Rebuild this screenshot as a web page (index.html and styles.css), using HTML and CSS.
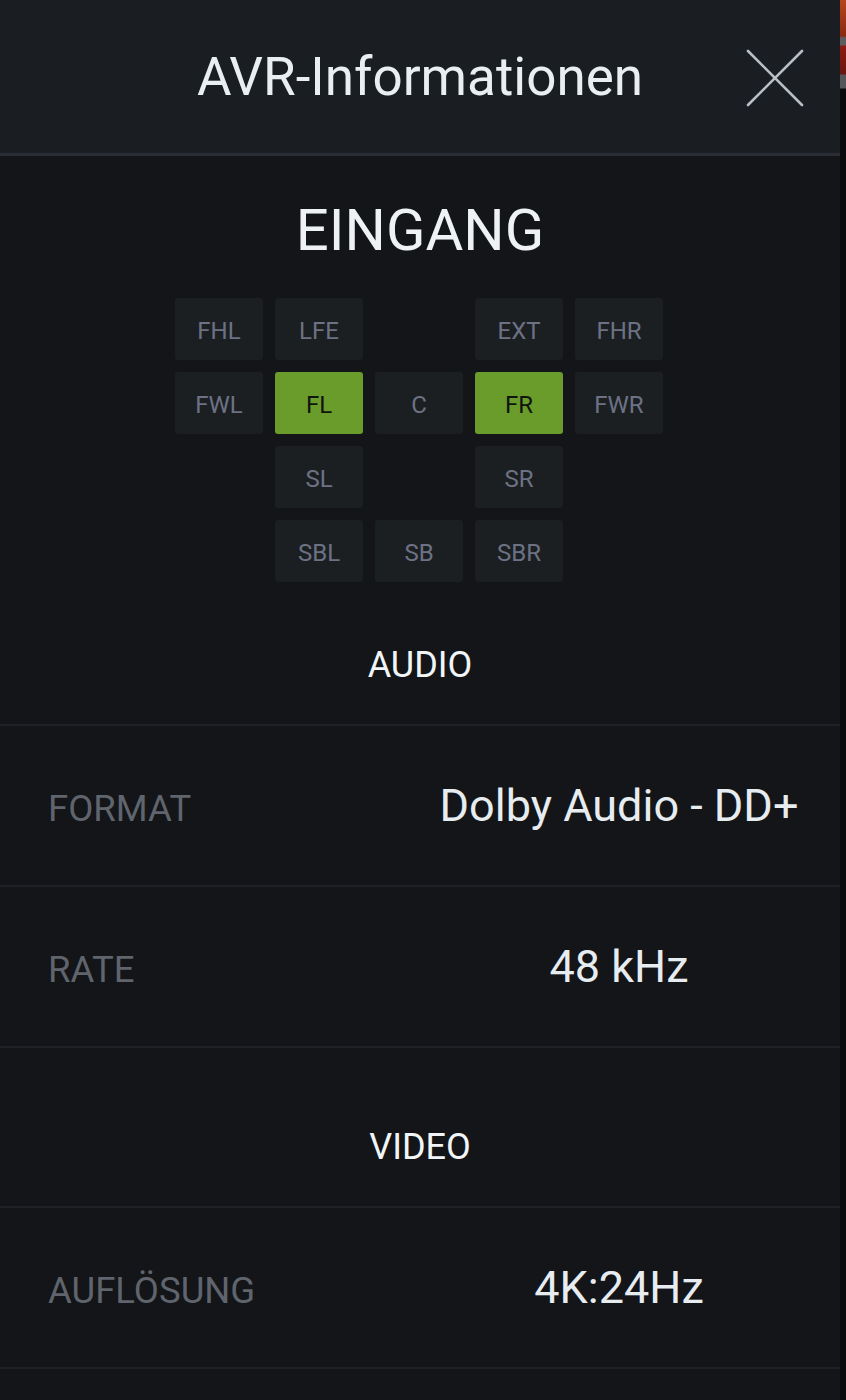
FILE: index.html
```html
<!DOCTYPE html>
<html lang="de">
<head>
<meta charset="utf-8">
<title>AVR-Informationen</title>
<link rel="stylesheet" href="styles.css">
</head>
<body>
<div class="screen">
  <main class="panel">
    <header class="topbar">
      <h1 class="title">AVR-Informationen</h1>
      <button class="close" aria-label="Schließen">
        <svg width="60" height="60" viewBox="0 0 60 60"><path d="M3 3 L57 57 M57 3 L3 57" stroke="#b8bfc7" stroke-width="2.6" stroke-linecap="round" fill="none"/></svg>
      </button>
    </header>

    <section class="input">
      <h2 class="input-title">EINGANG</h2>
      <div class="channels">
        <div class="ch">FHL</div>
        <div class="ch">LFE</div>
        <div class="ch empty"></div>
        <div class="ch">EXT</div>
        <div class="ch">FHR</div>

        <div class="ch">FWL</div>
        <div class="ch on">FL</div>
        <div class="ch">C</div>
        <div class="ch on">FR</div>
        <div class="ch">FWR</div>

        <div class="ch empty"></div>
        <div class="ch">SL</div>
        <div class="ch empty"></div>
        <div class="ch">SR</div>
        <div class="ch empty"></div>

        <div class="ch empty"></div>
        <div class="ch">SBL</div>
        <div class="ch">SB</div>
        <div class="ch">SBR</div>
        <div class="ch empty"></div>
      </div>
    </section>

    <h3 class="section-head first">AUDIO</h3>
    <div class="row">
      <span class="label">FORMAT</span>
      <span class="value">Dolby Audio - DD+</span>
    </div>
    <div class="row">
      <span class="label">RATE</span>
      <span class="value">48 kHz</span>
    </div>

    <h3 class="section-head">VIDEO</h3>
    <div class="row">
      <span class="label">AUFLÖSUNG</span>
      <span class="value">4K:24Hz</span>
    </div>
    <div class="row tail"></div>
  </main>
  <div class="edge"></div>
</div>
</body>
</html>
```

FILE: styles.css
```css
* { box-sizing: border-box; }
html, body {
  margin: 0;
  padding: 0;
  background: #131518;
  font-family: Roboto, "Noto Sans", "Liberation Sans", sans-serif;
}
.screen {
  display: flex;
  width: 846px;
  height: 1400px;
  overflow: hidden;
}
.panel {
  width: 840px;
  background: #131518;
  display: flex;
  flex-direction: column;
}
.panel > * { flex-shrink: 0; }
.edge {
  width: 6px;
  background: linear-gradient(to bottom, #b5461c 0, #8a2a12 36px, #5d5d60 38px, #5d5d60 45px, #8c1a12 46px, #6a1510 74px, #54565a 75px, #54565a 88px, #0a0b0c 89px, #0a0b0c 100%);
}
.topbar {
  position: relative;
  height: 156px;
  background: #1a1d21;
  border-bottom: 3px solid #2a2d35;
  display: flex;
  align-items: center;
  justify-content: center;
}
.title {
  margin: 0;
  font-weight: 400;
  font-size: 53px;
  color: #e8eef2;
  letter-spacing: 0;
}
.close {
  position: absolute;
  right: 35px;
  top: 48px;
  width: 60px;
  height: 60px;
  padding: 0;
  background: none;
  border: 0;
  display: flex;
}
.input {
  display: flex;
  flex-direction: column;
  align-items: center;
  padding-top: 40px;
}
.input-title {
  margin: 0;
  font-weight: 400;
  font-size: 58px;
  line-height: 68px;
  color: #eef2f5;
}
.channels {
  margin-top: 34px;
  margin-left: -2px;
  display: grid;
  grid-template-columns: repeat(5, 88px);
  grid-auto-rows: 62px;
  column-gap: 12px;
  row-gap: 12px;
}
.ch {
  background: #1c1f22;
  border-radius: 3px;
  display: flex;
  align-items: center;
  justify-content: center;
  padding-top: 3px;
  font-size: 24px;
  color: #6c7284;
}
.ch.empty { background: transparent; }
.ch.on {
  background: #6a9c2b;
  color: #101410;
}
.section-head {
  margin: 0;
  height: 144px;
  display: flex;
  align-items: flex-end;
  justify-content: center;
  padding-bottom: 39px;
  font-weight: 400;
  font-size: 36px;
  line-height: 40px;
  color: #f2f5f7;
  border-bottom: 2px solid #1e2125;
}
.section-head:not(.first) {
  height: 160px;
}
.row {
  display: grid;
  grid-template-columns: 398px 1fr;
  align-items: center;
  height: 161px;
  border-bottom: 2px solid #1e2125;
}
.label {
  padding-left: 48px;
  padding-top: 6px;
  font-size: 36.5px;
  color: #5f646d;
}
.value {
  text-align: center;
  font-size: 45px;
  color: #e6ecf0;
}
.row.tail { border-bottom: 0; }
```
